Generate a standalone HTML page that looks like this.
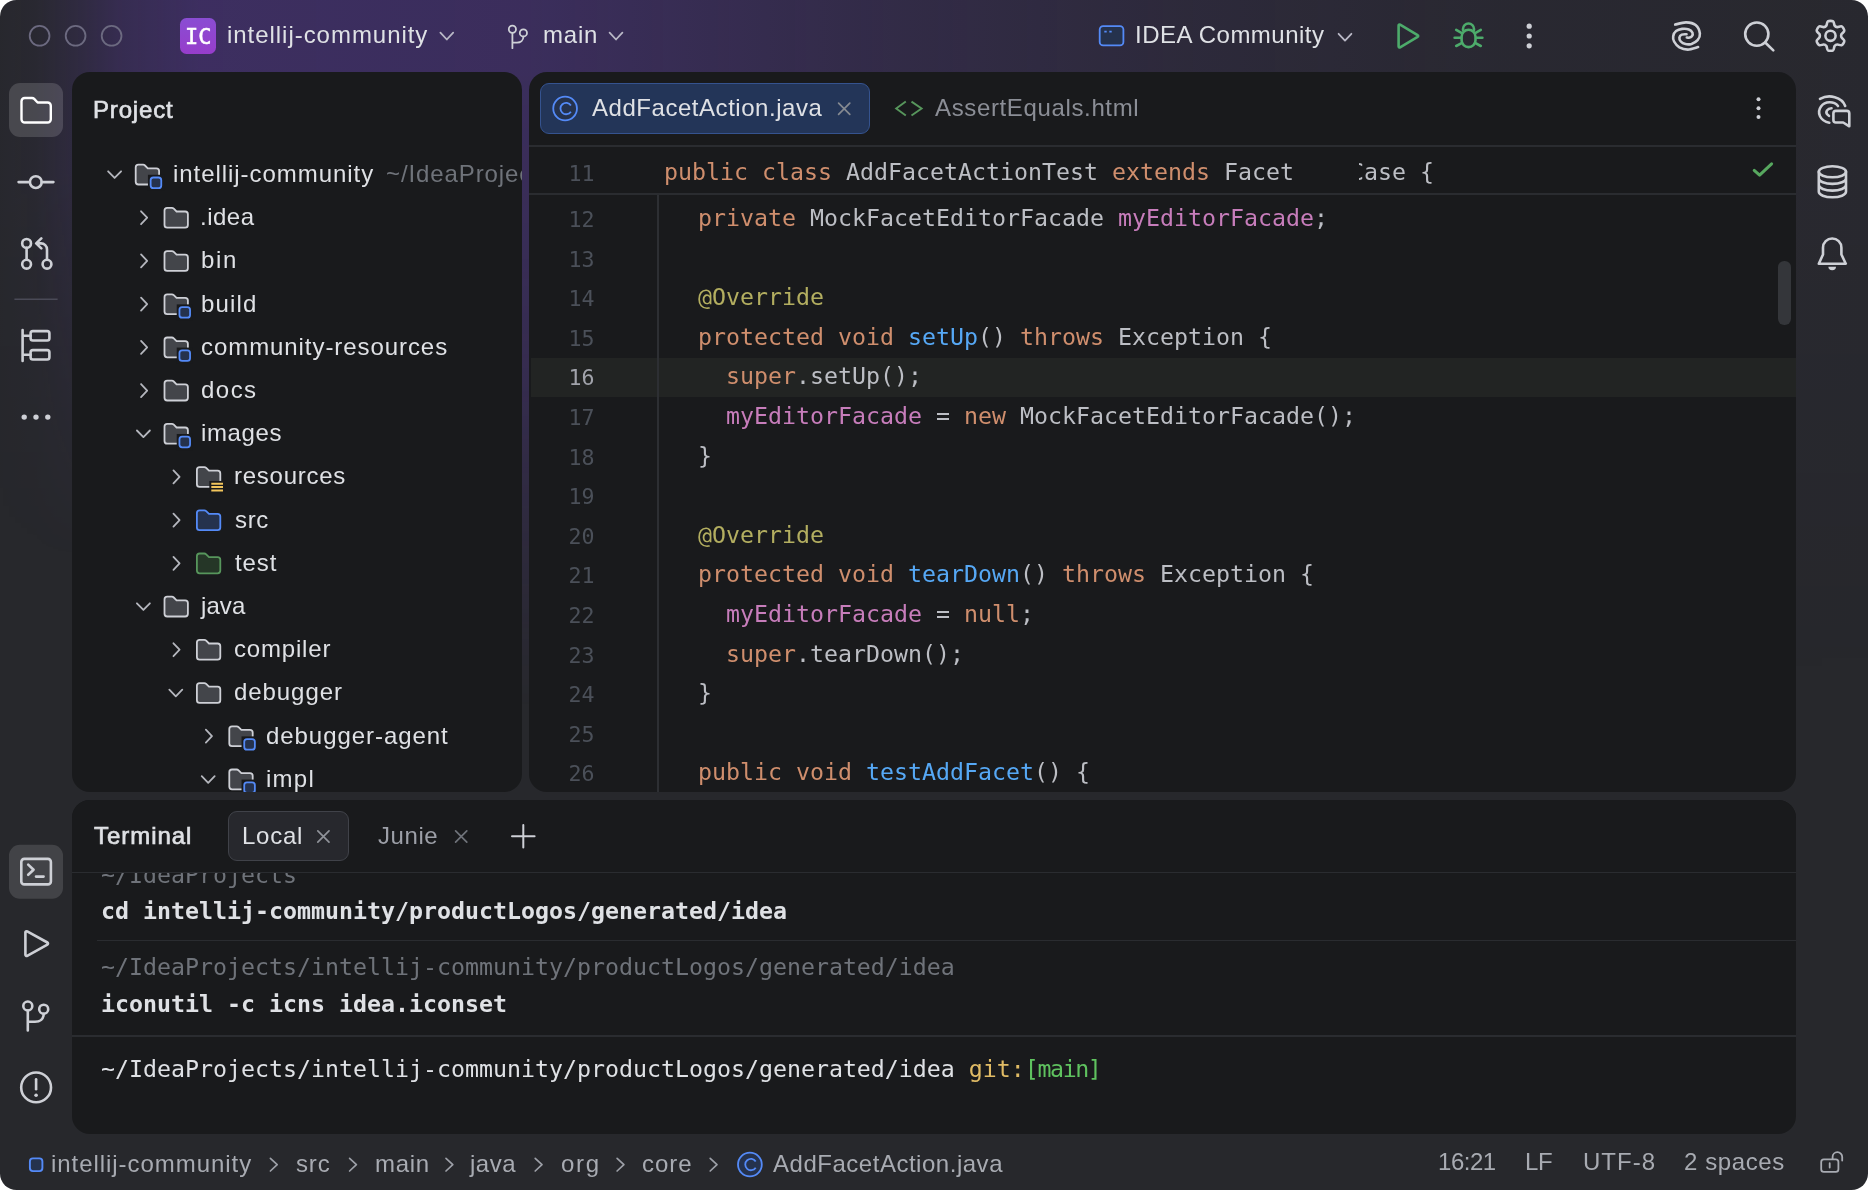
<!DOCTYPE html>
<html lang="en">
<head>
<meta charset="utf-8">
<title>intellij-community – AddFacetAction.java</title>
<style>
*{box-sizing:border-box;margin:0;padding:0}
html,body{width:1869px;height:1190px;background:#fff;overflow:hidden}
body{font-family:"Liberation Sans",sans-serif;font-size:24px;color:#dfe1e5;position:relative;-webkit-font-smoothing:antialiased}
#win{position:absolute;left:0;top:0;width:1868.2px;height:1189.6px;border-radius:16.5px;background:#27282c;overflow:hidden}
#glow,#glowL{position:absolute;top:0;background-image:linear-gradient(to right,rgba(106,60,204,.01) 0px,rgba(106,60,204,.035) 36px,rgba(106,60,204,.115) 72px,rgba(106,60,204,.23) 120px,rgba(106,60,204,.33) 200px,rgba(106,60,204,.30) 525px,rgba(106,60,204,.17) 900px,rgba(106,60,204,.09) 1200px,rgba(106,60,204,.035) 1500px,rgba(106,60,204,.02) 1868px);background-repeat:no-repeat;background-size:1868px 100%}
#glow{left:72px;width:1796px;height:760px;background-position:-72px 0;
 -webkit-mask-image:linear-gradient(to bottom,#000 0,#000 8%,rgba(0,0,0,.88) 32%,rgba(0,0,0,.72) 50%,rgba(0,0,0,.36) 70%,transparent 93%);mask-image:linear-gradient(to bottom,#000 0,#000 8%,rgba(0,0,0,.88) 32%,rgba(0,0,0,.72) 50%,rgba(0,0,0,.36) 70%,transparent 93%)}
#glowL{left:0;width:72px;height:560px;background-position:0 0;
 -webkit-mask-image:linear-gradient(to bottom,#000 0,#000 30%,rgba(0,0,0,.45) 65%,transparent 100%);mask-image:linear-gradient(to bottom,#000 0,#000 30%,rgba(0,0,0,.45) 65%,transparent 100%)}
.panel{position:absolute;background:#191a1c;border-radius:18px;overflow:hidden}
#proj{left:72px;top:72px;width:450px;height:719.5px}
#edit{left:529px;top:72px;width:1267px;height:719.5px}
#term{left:72px;top:799.5px;width:1724px;height:334px}
.t{will-change:transform;position:absolute;white-space:pre;line-height:43.2px;height:43.2px;letter-spacing:.55px}
.sb{font-weight:bold}
.semi{-webkit-text-stroke:.65px currentColor}
.gray{color:#6f737a}
.mono{font-family:"DejaVu Sans Mono","Liberation Mono",monospace;font-size:23.25px;letter-spacing:0;line-height:39.6px;height:39.6px}
.hl{position:absolute;background:#222423}
.sep{position:absolute;background:#2a2c30;height:1.8px}
svg{position:absolute;left:0;top:0;overflow:visible}
/* code colours */
.k{color:#cf8e6d}.f{color:#c77dbb}.a{color:#b3ae60}.m{color:#56a8f5}.c{color:#bcbec4}
.ln{color:#4b5059;text-align:right;width:60.6px;font-size:21.6px}
.cur{color:#a1a3ab}
</style>
</head>
<body>

<svg width="0" height="0" style="position:absolute">
<defs>
<symbol id="fo" viewBox="0 0 16 16"><path d="M1.5 4C1.5 3.17 2.17 2.5 3 2.5H5.59C5.98 2.5 6.37 2.66 6.65 2.94L8.21 4.5H13C13.83 4.5 14.5 5.17 14.5 6V12C14.5 12.83 13.83 13.5 13 13.5H3C2.17 13.5 1.5 12.83 1.5 12V4Z" fill="#43454a" stroke="#ced0d6"/></symbol>
<symbol id="fm" viewBox="0 0 16 16" overflow="visible"><path d="M1.5 4C1.5 3.17 2.17 2.5 3 2.5H5.59C5.98 2.5 6.37 2.66 6.65 2.94L8.21 4.5H13C13.83 4.5 14.5 5.17 14.5 6V12C14.5 12.83 13.83 13.5 13 13.5H3C2.17 13.5 1.5 12.83 1.5 12V4Z" fill="#43454a" stroke="#ced0d6"/><rect x="8.3" y="8.1" width="9" height="9" fill="#191a1c"/><rect x="9.8" y="9.6" width="5.9" height="5.9" rx="1.5" fill="#25324d" stroke="#548af7"/></symbol>
<symbol id="fr" viewBox="0 0 16 16" overflow="visible"><path d="M1.5 4C1.5 3.17 2.17 2.5 3 2.5H5.59C5.98 2.5 6.37 2.66 6.65 2.94L8.21 4.5H13C13.83 4.5 14.5 5.17 14.5 6V12C14.5 12.83 13.83 13.5 13 13.5H3C2.17 13.5 1.5 12.83 1.5 12V4Z" fill="#43454a" stroke="#ced0d6"/><rect x="8.4" y="10.2" width="9" height="7" fill="#191a1c"/><path d="M9.5 11.7H16M9.5 13.6H16M9.5 15.5H16" stroke="#f2c55c" stroke-width="1.1" stroke-linecap="butt"/></symbol>
<symbol id="fs" viewBox="0 0 16 16"><path d="M1.5 4C1.5 3.17 2.17 2.5 3 2.5H5.59C5.98 2.5 6.37 2.66 6.65 2.94L8.21 4.5H13C13.83 4.5 14.5 5.17 14.5 6V12C14.5 12.83 13.83 13.5 13 13.5H3C2.17 13.5 1.5 12.83 1.5 12V4Z" fill="#25324d" stroke="#548af7"/></symbol>
<symbol id="ft" viewBox="0 0 16 16"><path d="M1.5 4C1.5 3.17 2.17 2.5 3 2.5H5.59C5.98 2.5 6.37 2.66 6.65 2.94L8.21 4.5H13C13.83 4.5 14.5 5.17 14.5 6V12C14.5 12.83 13.83 13.5 13 13.5H3C2.17 13.5 1.5 12.83 1.5 12V4Z" fill="#253627" stroke="#57965c"/></symbol>
<symbol id="cr" viewBox="0 0 16 16"><path d="M6.7 4.7L10.1 8.3L6.7 11.9" fill="none" stroke="#b4b6bd" stroke-linecap="round" stroke-linejoin="round"/></symbol>
<symbol id="cd" viewBox="0 0 16 16"><path d="M4.4 6.5L8 10.2L11.6 6.5" fill="none" stroke="#b4b6bd" stroke-linecap="round" stroke-linejoin="round"/></symbol>
</defs>
</svg>
<div id="win">
<div id="glow"></div><div id="glowL"></div>

<!-- ===== title bar text ===== -->
<div class="t" id="tt1" style="left:226.8px;letter-spacing:0.96px;top:12.9px">intellij-community</div>
<div class="t" id="tt2" style="left:543.1px;letter-spacing:0.80px;top:12.9px">main</div>
<div class="t" id="tt3" style="left:1134.9px;letter-spacing:0.48px;top:12.9px">IDEA Community</div>
<div style="position:absolute;left:180px;top:18px;width:36px;height:36px;border-radius:6.5px;background:linear-gradient(180deg,#8a4dd3,#973dcb)"></div>
<div class="t mono" id="ic" style="left:185px;top:17px;color:#fff;font-size:22px;-webkit-text-stroke:.5px #fff">IC</div>

<!-- ===== project panel ===== -->
<div class="panel" id="proj">
<div class="o" style="position:absolute;left:-72px;top:-72px;width:1868px;height:1189px">
<div class="t semi" id="pj" style="left:93.4px;letter-spacing:0.83px;top:88px">Project</div>
<div class="t" id="tr0" style="left:172.8px;letter-spacing:0.95px;top:151.9px">intellij-community</div>
<div class="t gray" id="tr0g" style="left:386.4px;letter-spacing:0.9px;top:151.9px">~/IdeaProjects/intellij-community</div>
<div class="t" id="tr1" style="left:200.4px;letter-spacing:0.49px;top:195.1px">.idea</div>
<div class="t" id="tr2" style="left:201.4px;letter-spacing:1.68px;top:238.3px">bin</div>
<div class="t" id="tr3" style="left:201.4px;letter-spacing:1.13px;top:281.5px">build</div>
<div class="t" id="tr4" style="left:201.4px;letter-spacing:0.93px;top:324.7px">community-resources</div>
<div class="t" id="tr5" style="left:201.4px;letter-spacing:1.47px;top:367.9px">docs</div>
<div class="t" id="tr6" style="left:201.4px;letter-spacing:0.62px;top:411.1px">images</div>
<div class="t" id="tr7" style="left:233.9px;letter-spacing:0.74px;top:454.3px">resources</div>
<div class="t" id="tr8" style="left:234.9px;letter-spacing:0.65px;top:497.5px">src</div>
<div class="t" id="tr9" style="left:234.9px;letter-spacing:0.88px;top:540.7px">test</div>
<div class="t" id="tr10" style="left:201.0px;letter-spacing:0.08px;top:583.9px">java</div>
<div class="t" id="tr11" style="left:233.9px;letter-spacing:0.82px;top:627.1px">compiler</div>
<div class="t" id="tr12" style="left:233.9px;letter-spacing:0.93px;top:670.3px">debugger</div>
<div class="t" id="tr13" style="left:266.0px;letter-spacing:0.94px;top:713.5px">debugger-agent</div>
<div class="t" id="tr14" style="left:266.0px;letter-spacing:1.25px;top:756.7px">impl</div>
<svg width="1868" height="1189" viewBox="0 0 1868 1189">
<use href="#cd" x="100.2" y="159.6" width="28.8" height="28.8"/><use href="#fm" x="133.0" y="160.2" width="28.8" height="28.8"/>
<use href="#cr" x="129.0" y="202.8" width="28.8" height="28.8"/><use href="#fo" x="161.8" y="203.4" width="28.8" height="28.8"/>
<use href="#cr" x="129.0" y="246.0" width="28.8" height="28.8"/><use href="#fo" x="161.8" y="246.6" width="28.8" height="28.8"/>
<use href="#cr" x="129.0" y="289.2" width="28.8" height="28.8"/><use href="#fm" x="161.8" y="289.8" width="28.8" height="28.8"/>
<use href="#cr" x="129.0" y="332.4" width="28.8" height="28.8"/><use href="#fm" x="161.8" y="333.0" width="28.8" height="28.8"/>
<use href="#cr" x="129.0" y="375.6" width="28.8" height="28.8"/><use href="#fo" x="161.8" y="376.2" width="28.8" height="28.8"/>
<use href="#cd" x="129.0" y="418.8" width="28.8" height="28.8"/><use href="#fm" x="161.8" y="419.4" width="28.8" height="28.8"/>
<use href="#cr" x="161.4" y="462.0" width="28.8" height="28.8"/><use href="#fr" x="194.2" y="462.6" width="28.8" height="28.8"/>
<use href="#cr" x="161.4" y="505.2" width="28.8" height="28.8"/><use href="#fs" x="194.2" y="505.8" width="28.8" height="28.8"/>
<use href="#cr" x="161.4" y="548.4" width="28.8" height="28.8"/><use href="#ft" x="194.2" y="549.0" width="28.8" height="28.8"/>
<use href="#cd" x="129.0" y="591.6" width="28.8" height="28.8"/><use href="#fo" x="161.8" y="592.2" width="28.8" height="28.8"/>
<use href="#cr" x="161.4" y="634.8" width="28.8" height="28.8"/><use href="#fo" x="194.2" y="635.4" width="28.8" height="28.8"/>
<use href="#cd" x="161.4" y="678.0" width="28.8" height="28.8"/><use href="#fo" x="194.2" y="678.6" width="28.8" height="28.8"/>
<use href="#cr" x="193.8" y="721.2" width="28.8" height="28.8"/><use href="#fm" x="226.6" y="721.8" width="28.8" height="28.8"/>
<use href="#cd" x="193.8" y="764.4" width="28.8" height="28.8"/><use href="#fm" x="226.6" y="765.0" width="28.8" height="28.8"/>
</svg>
</div>
</div>

<!-- ===== editor panel ===== -->
<div class="panel" id="edit">
<div class="o" style="position:absolute;left:-529px;top:-72px;width:1868px;height:1189px">
<div id="tab1" style="position:absolute;left:540px;top:82.8px;width:329.6px;height:51.4px;border-radius:9px;background:#233558;border:1.8px solid #35538f"></div>
<div class="t" id="tb1" style="left:591.8px;letter-spacing:0.54px;top:86.0px">AddFacetAction.java</div>
<div class="t" id="tb2" style="left:934.9px;letter-spacing:0.64px;top:86.0px;color:#8b8e96">AssertEquals.html</div>
<div class="sep" style="left:529px;top:145.2px;width:1267px"></div>
<div class="sep" style="left:529px;top:193.4px;width:1267px"></div>
<div class="hl" style="left:530.8px;top:357.6px;width:1265.2px;height:39.2px"></div>
<div style="position:absolute;left:657.4px;top:195.2px;width:1.6px;height:600px;background:#2d2f33"></div>
<div style="position:absolute;left:1778px;top:261px;width:12.5px;height:64px;border-radius:6.2px;background:#34363a"></div>
<div class="t mono ln" style="left:533.8px;top:153.7px">11</div>
<div class="t mono c" id="l11" style="left:663.8px;top:151.7px"><span class="k">public class</span> AddFacetActionTest <span class="k">extends</span> FacetTestCase {</div>
<div style="position:absolute;left:1293.5px;top:150px;width:65.5px;height:42px;background:#191a1c"></div>
<div class="t mono ln" style="left:533.8px;top:200.0px">12</div>
<div class="t mono c" id="l12" style="left:697.8px;top:198.0px"><span class="k">private</span> MockFacetEditorFacade <span class="f">myEditorFacade</span>;</div>
<div class="t mono ln" style="left:533.8px;top:239.6px">13</div>
<div class="t mono ln" style="left:533.8px;top:279.2px">14</div>
<div class="t mono c" id="l14" style="left:697.8px;top:277.2px"><span class="a">@Override</span></div>
<div class="t mono ln" style="left:533.8px;top:318.8px">15</div>
<div class="t mono c" id="l15" style="left:697.8px;top:316.8px"><span class="k">protected void</span> <span class="m">setUp</span>() <span class="k">throws</span> Exception {</div>
<div class="t mono ln cur" style="left:533.8px;top:358.4px">16</div>
<div class="t mono c" id="l16" style="left:725.8px;top:356.4px"><span class="k">super</span>.setUp();</div>
<div class="t mono ln" style="left:533.8px;top:398.0px">17</div>
<div class="t mono c" id="l17" style="left:725.8px;top:396.0px"><span class="f">myEditorFacade</span> = <span class="k">new</span> MockFacetEditorFacade();</div>
<div class="t mono ln" style="left:533.8px;top:437.6px">18</div>
<div class="t mono c" id="l18" style="left:697.8px;top:435.6px">}</div>
<div class="t mono ln" style="left:533.8px;top:477.2px">19</div>
<div class="t mono ln" style="left:533.8px;top:516.8px">20</div>
<div class="t mono c" id="l20" style="left:697.8px;top:514.8px"><span class="a">@Override</span></div>
<div class="t mono ln" style="left:533.8px;top:556.4px">21</div>
<div class="t mono c" id="l21" style="left:697.8px;top:554.4px"><span class="k">protected void</span> <span class="m">tearDown</span>() <span class="k">throws</span> Exception {</div>
<div class="t mono ln" style="left:533.8px;top:596.0px">22</div>
<div class="t mono c" id="l22" style="left:725.8px;top:594.0px"><span class="f">myEditorFacade</span> = <span class="k">null</span>;</div>
<div class="t mono ln" style="left:533.8px;top:635.6px">23</div>
<div class="t mono c" id="l23" style="left:725.8px;top:633.6px"><span class="k">super</span>.tearDown();</div>
<div class="t mono ln" style="left:533.8px;top:675.2px">24</div>
<div class="t mono c" id="l24" style="left:697.8px;top:673.2px">}</div>
<div class="t mono ln" style="left:533.8px;top:714.8px">25</div>
<div class="t mono ln" style="left:533.8px;top:754.4px">26</div>
<div class="t mono c" id="l26" style="left:697.8px;top:752.4px"><span class="k">public void</span> <span class="m">testAddFacet</span>() {</div>
</div>
</div>

<!-- ===== terminal panel ===== -->
<div class="panel" id="term">
<div class="o" style="position:absolute;left:-72px;top:-799.5px;width:1868px;height:1189px">
<div class="t mono gray" style="left:101px;top:855.2px">~/IdeaProjects</div>
<div style="position:absolute;left:72px;top:799.5px;width:1724px;height:72.2px;background:#191a1c"></div>
<div class="sep" style="left:72px;top:871.7px;width:1724px"></div>
<div class="t semi" id="tm0" style="left:94.2px;letter-spacing:0.95px;top:813.8px">Terminal</div>
<div id="tab2" style="position:absolute;left:227.8px;top:810.5px;width:121px;height:50.8px;border-radius:9px;background:#27282d;border:1.8px solid #404249"></div>
<div class="t" id="tm1" style="left:241.8px;letter-spacing:0.76px;top:813.8px">Local</div>
<div class="t" id="tm2" style="left:378.4px;letter-spacing:0.56px;top:813.8px;color:#9c9fa7">Junie</div>
<div class="t mono sb" id="tc1" style="left:101px;top:891.0px">cd intellij-community/productLogos/generated/idea</div>
<div class="sep" style="left:97px;top:939.7px;width:1699px"></div>
<div class="t mono gray" id="tc2" style="left:101px;top:947.1px">~/IdeaProjects/intellij-community/productLogos/generated/idea</div>
<div class="t mono sb" id="tc3" style="left:101px;top:984.1px">iconutil -c icns idea.iconset</div>
<div class="sep" style="left:72px;top:1035.3px;width:1724px"></div>
<div class="t mono" id="tc4" style="left:101px;top:1048.8px">~/IdeaProjects/intellij-community/productLogos/generated/idea <span style="color:#e0bb65">git:</span><span style="color:#5fc25f;letter-spacing:-1.4px">[main]</span></div>
</div>
</div>

<!-- ===== status bar ===== -->
<div class="t" id="st0" style="left:50.5px;letter-spacing:0.95px;top:1142.2px;color:#a8abb2">intellij-community</div>
<div class="t" id="st1" style="left:295.9px;letter-spacing:0.85px;top:1142.2px;color:#a8abb2">src</div>
<div class="t" id="st2" style="left:374.9px;letter-spacing:0.66px;top:1142.2px;color:#a8abb2">main</div>
<div class="t" id="st3" style="left:470.4px;letter-spacing:0.52px;top:1142.2px;color:#a8abb2">java</div>
<div class="t" id="st4" style="left:561.3px;letter-spacing:1.66px;top:1142.2px;color:#a8abb2">org</div>
<div class="t" id="st5" style="left:642.0px;letter-spacing:0.99px;top:1142.2px;color:#a8abb2">core</div>
<div class="t" id="st6" style="left:773.0px;letter-spacing:0.52px;top:1142.2px;color:#a8abb2">AddFacetAction.java</div>
<div class="t" id="st7" style="left:1438.2px;letter-spacing:-0.46px;top:1140.0px;color:#a8abb2">16:21</div>
<div class="t" id="st8" style="left:1525.4px;letter-spacing:-0.32px;top:1140.0px;color:#a8abb2">LF</div>
<div class="t" id="st9" style="left:1583.0px;letter-spacing:1.00px;top:1140.0px;color:#a8abb2">UTF-8</div>
<div class="t" id="st10" style="left:1683.6px;letter-spacing:0.60px;top:1140.0px;color:#a8abb2">2 spaces</div>

<!-- ===== icon overlay ===== -->
<svg id="icons" width="1868" height="1189" viewBox="0 0 1868 1189" fill="none" stroke-linecap="round" stroke-linejoin="round">
<circle cx="39.6" cy="35.8" r="9.9" stroke="#6c6a80" stroke-width="1.8"/>
<circle cx="75.6" cy="35.8" r="9.9" stroke="#6c6a80" stroke-width="1.8"/>
<circle cx="111.6" cy="35.8" r="9.9" stroke="#6c6a80" stroke-width="1.8"/>
<path d="M440.4 32.7L446.8 39.5L453.2 32.7" stroke="#b9b8c6" stroke-width="1.8"/>
<path d="M609.6 32.7L616.0 39.5L622.4 32.7" stroke="#b9b8c6" stroke-width="1.8"/>
<path d="M1338.6 33.8L1345.0 40.6L1351.4 33.8" stroke="#b9b8c6" stroke-width="1.8"/>
<g stroke="#ced0d6" stroke-width="1.8"><circle cx="512.4" cy="29.3" r="3.6"/><circle cx="523.4" cy="32.9" r="3.6"/><path d="M512.4 33V48.2M523.4 36.6C523.4 40.4 520.6 42.7 517 42.7H512.4"/></g>
<rect x="1099.7" y="26.2" width="23.7" height="19.1" rx="3.4" fill="#25324d" stroke="#548af7" stroke-width="1.8"/><path d="M1104.3 31.6h2.4M1109.3 31.6h2.4" stroke="#548af7" stroke-width="1.6" stroke-linecap="butt"/>
<path d="M1398.6 25.6V46.4a1 1 0 0 0 1.5 .9L1417.6 36.9a1 1 0 0 0 0-1.8L1400.1 24.7a1 1 0 0 0-1.5 .9Z" stroke="#4dab6b" stroke-width="2.6"/>
<g stroke="#4dab6b" stroke-width="2.6"><rect x="1461.6" y="29.7" width="13.9" height="17.4" rx="6.95"/><path d="M1463 29.9V29a5.5 5.5 0 0 1 11 0V29.9"/><path d="M1461 32.6L1456.2 29.8M1460.8 37.8H1454.6M1461.6 43.2L1456.2 46M1476 32.6L1480.8 29.8M1476.3 37.8H1482.4M1475.5 43.2L1480.8 46"/></g>
<circle cx="1529.2" cy="26.2" r="2.6" fill="#ced0d6"/>
<circle cx="1529.2" cy="36" r="2.6" fill="#ced0d6"/>
<circle cx="1529.2" cy="45.8" r="2.6" fill="#ced0d6"/>
<g stroke="#ced0d6" stroke-width="2.6"><path d="M1675.2 24.6C1677.0 24.2 1682.8 22.3 1686.2 22.4C1689.6 22.5 1693.3 23.2 1695.6 25.1C1697.9 27.0 1699.6 31.0 1699.9 33.5C1700.2 36.0 1699.0 38.5 1697.6 40.2C1696.2 41.9 1693.5 43.2 1691.5 43.9C1689.5 44.5 1687.3 44.5 1685.5 44.1C1683.7 43.7 1681.8 42.6 1680.8 41.5C1679.8 40.4 1679.2 38.6 1679.4 37.5C1679.6 36.4 1680.6 35.1 1681.8 34.6C1683.0 34.1 1685.7 34.3 1686.5 34.3"/><path d="M1698.1 47.1C1696.4 47.5 1690.9 49.6 1687.8 49.6C1684.7 49.6 1681.7 48.6 1679.4 47.3C1677.1 45.9 1675.1 43.4 1674.1 41.5C1673.1 39.6 1672.9 37.9 1673.2 36.2C1673.5 34.5 1674.6 32.3 1676.1 31.1C1677.6 29.9 1680.0 29.2 1682.1 28.9C1684.2 28.6 1687.1 28.8 1688.8 29.4C1690.5 30.0 1692.0 31.7 1692.5 32.8C1693.0 33.9 1692.5 35.4 1691.9 36.2C1691.3 37.0 1689.7 37.5 1688.8 37.7C1687.9 37.9 1687.1 37.5 1686.8 37.5"/></g>
<g stroke="#ced0d6" stroke-width="2.6"><circle cx="1756.8" cy="34.1" r="11.6"/><path d="M1765.2 42.5L1773.3 50.4"/></g>
<g stroke="#ced0d6" stroke-width="2.6"><path d="M1833.1 21.3C1832.1 20.7 1828.9 20.7 1827.9 21.3C1826.9 22.0 1827.0 24.7 1826.4 25.6C1825.7 26.5 1824.8 27.0 1823.7 27.1C1822.7 27.2 1820.3 25.8 1819.2 26.4C1818.2 26.9 1816.6 29.6 1816.7 30.8C1816.7 32.0 1819.2 33.3 1819.6 34.3C1820.0 35.3 1820.0 36.3 1819.6 37.3C1819.2 38.3 1816.7 39.6 1816.7 40.8C1816.6 42.0 1818.2 44.7 1819.2 45.2C1820.3 45.8 1822.7 44.4 1823.7 44.5C1824.8 44.6 1825.7 45.1 1826.4 46.0C1827.0 46.9 1826.9 49.6 1827.9 50.3C1828.9 50.9 1832.1 50.9 1833.1 50.3C1834.1 49.6 1834.0 46.9 1834.6 46.0C1835.3 45.1 1836.2 44.6 1837.3 44.5C1838.3 44.4 1840.7 45.8 1841.8 45.2C1842.8 44.7 1844.4 42.0 1844.3 40.8C1844.3 39.6 1841.8 38.3 1841.4 37.3C1841.0 36.3 1841.0 35.3 1841.4 34.3C1841.8 33.3 1844.3 32.0 1844.3 30.8C1844.4 29.6 1842.8 26.9 1841.8 26.4C1840.7 25.8 1838.3 27.2 1837.3 27.1C1836.2 27.0 1835.3 26.5 1834.6 25.6C1834.0 24.7 1834.1 22.0 1833.1 21.3Z"/><circle cx="1830.5" cy="35.8" r="5.1"/></g>
<rect x="9" y="83" width="54" height="54" rx="11" fill="#ffffff" fill-opacity=".15"/>
<path d="M21.5 101.2a3.2 3.2 0 0 1 3.2-3.2h7.3a3 3 0 0 1 2.2 .9l3.4 3.6h10a3.2 3.2 0 0 1 3.2 3.2v13.6a3.2 3.2 0 0 1-3.2 3.2h-22.9a3.2 3.2 0 0 1-3.2-3.2Z" stroke="#ffffff" stroke-width="2.4"/>
<g stroke="#ced0d6" stroke-width="2.6"><circle cx="35.8" cy="182.1" r="5.9"/><path d="M18.6 182.1H29.9M41.7 182.1H53.4"/></g>
<g stroke="#ced0d6" stroke-width="2.6"><circle cx="26.6" cy="243.4" r="4.4"/><circle cx="26.6" cy="264.2" r="4.4"/><circle cx="47" cy="264.2" r="4.4"/><path d="M26.6 247.8V259.8M47 259.8V249.4a6 6 0 0 0-6-6H37M41.3 238.4L36.2 243.4L41.3 248.4"/></g>
<path d="M14.4 299.2H57.6" stroke="#4a4a57" stroke-width="1.6" stroke-linecap="butt"/>
<g stroke="#ced0d6" stroke-width="2.6"><path d="M22.6 330V361M22.6 335.8H30.6M22.6 354.8H30.6"/><rect x="30.6" y="331.1" width="18.8" height="9.4" rx="2.2"/><rect x="30.6" y="350.1" width="18.8" height="9.4" rx="2.2"/></g>
<circle cx="24.2" cy="417.1" r="2.7" fill="#ced0d6"/>
<circle cx="36" cy="417.1" r="2.7" fill="#ced0d6"/>
<circle cx="47.8" cy="417.1" r="2.7" fill="#ced0d6"/>
<rect x="9" y="844.7" width="54" height="54" rx="11" fill="#ffffff" fill-opacity=".13"/>
<g stroke="#ced0d6" stroke-width="2.6"><rect x="21.3" y="858.9" width="29.6" height="25.5" rx="3"/><path d="M28.2 864.6L33.6 869.7L28.2 874.8M36 876.6H43.6"/></g>
<path d="M25.4 932.4V954.8a1.2 1.2 0 0 0 1.8 1L47.4 944.6a1.2 1.2 0 0 0 0-2.1L27.2 931.4a1.2 1.2 0 0 0-1.8 1Z" stroke="#ced0d6" stroke-width="2.6"/>
<g stroke="#ced0d6" stroke-width="2.6"><circle cx="27.8" cy="1006" r="4.5"/><circle cx="43.7" cy="1009.2" r="4.5"/><path d="M27.8 1010.5V1030.5M43.7 1013.7C43.7 1018.8 40 1021.8 35 1021.8H27.8"/></g>
<g stroke="#ced0d6" stroke-width="2.6"><circle cx="36.1" cy="1087.4" r="14.9"/><path d="M36.1 1079.2V1089.2" stroke-width="2.6"/></g><circle cx="36.1" cy="1095.3" r="1.8" fill="#ced0d6"/>
<g stroke="#ced0d6" stroke-width="2.6"><path d="M1820 98.8C1829 94 1842 96.8 1845.2 106"/><path d="M1838 106C1834 101 1825 101 1821 106.5C1816.6 112.5 1820 121 1829.3 122.7"/><path d="M1831.5 108.3C1827.5 108.3 1825 111.8 1827.3 114.4L1829 115.9"/><path d="M1835.9 110.9H1846.8a2.5 2.5 0 0 1 2.5 2.5V126.3L1843.2 122.5H1835.9a2.5 2.5 0 0 1-2.5-2.5V113.4a2.5 2.5 0 0 1 2.5-2.5Z"/></g>
<g stroke="#ced0d6" stroke-width="2.6"><ellipse cx="1832.4" cy="171.8" rx="13.6" ry="5.5"/><path d="M1818.8 171.8V191.8a13.6 5.5 0 0 0 27.2 0V171.8M1818.8 178.4a13.6 5.5 0 0 0 27.2 0M1818.8 185.1a13.6 5.5 0 0 0 27.2 0"/></g>
<path d="M1818.8 263.7L1823 254.5V247.7a9.2 9.2 0 0 1 18.4 0V254.5L1845.8 263.7Z" stroke="#ced0d6" stroke-width="2.6"/><path d="M1828.4 266.8h7.6a3.8 3.4 0 0 1-7.6 0Z" fill="#ced0d6"/>
<circle cx="565.1" cy="108.5" r="11.85" fill="#25324d" stroke="#548af7" stroke-width="1.8"/><path d="M570.9 105.4A5.7 5.7 0 1 0 570.9 111.7" stroke="#548af7" stroke-width="1.8" stroke-linecap="butt"/>
<path d="M838.6 103.1L849.8 114.3M849.8 103.1L838.6 114.3" stroke="#868a91" stroke-width="1.7"/>
<path d="M905.8 101.6L896.2 108.5L905.8 115.5M911.5 101.6L921.6 108.5L911.5 115.5" stroke="#57965c" stroke-width="1.9" stroke-linecap="butt" stroke-linejoin="miter"/>
<circle cx="1758.5" cy="99.2" r="2" fill="#ced0d6"/>
<circle cx="1758.5" cy="108.2" r="2" fill="#ced0d6"/>
<circle cx="1758.5" cy="117.1" r="2" fill="#ced0d6"/>
<path d="M1754.2 170.4L1759.6 175.2L1771.6 163.8" stroke="#57a85f" stroke-width="3"/>
<path d="M317.8 830.9L329.0 842.1M329.0 830.9L317.8 842.1" stroke="#8f9299" stroke-width="1.7"/>
<path d="M455.6 830.9L466.8 842.1M466.8 830.9L455.6 842.1" stroke="#6f737a" stroke-width="1.7"/>
<path d="M512 836.3H534.6M523.3 825V847.6" stroke="#ced0d6" stroke-width="2"/>
<rect x="29.9" y="1158.4" width="12.5" height="12.7" rx="3" fill="#25324d" stroke="#548af7" stroke-width="1.9"/>
<path d="M270.4 1158.4L277.2 1164.7L270.4 1171.0" stroke="#9da0a8" stroke-width="1.7"/>
<path d="M349.6 1158.4L356.4 1164.7L349.6 1171.0" stroke="#9da0a8" stroke-width="1.7"/>
<path d="M446.0 1158.4L452.8 1164.7L446.0 1171.0" stroke="#9da0a8" stroke-width="1.7"/>
<path d="M535.2 1158.4L542.0 1164.7L535.2 1171.0" stroke="#9da0a8" stroke-width="1.7"/>
<path d="M617.1 1158.4L623.9 1164.7L617.1 1171.0" stroke="#9da0a8" stroke-width="1.7"/>
<path d="M710.2 1158.4L717.0 1164.7L710.2 1171.0" stroke="#9da0a8" stroke-width="1.7"/>
<circle cx="749.9" cy="1164.5" r="11.9" fill="#25324d" stroke="#548af7" stroke-width="1.8"/><path d="M755.7 1161.4A5.7 5.7 0 1 0 755.7 1167.7" stroke="#548af7" stroke-width="1.8" stroke-linecap="butt"/>
<g stroke="#a8abb2" stroke-width="1.8"><rect x="1821.2" y="1159.3" width="17.2" height="12.5" rx="2.6"/><path d="M1832.6 1159V1157a4.8 4.8 0 0 1 9.6 0V1160.6M1829.7 1163.2V1167.6"/></g>
</svg>
</div>
</body>
</html>
